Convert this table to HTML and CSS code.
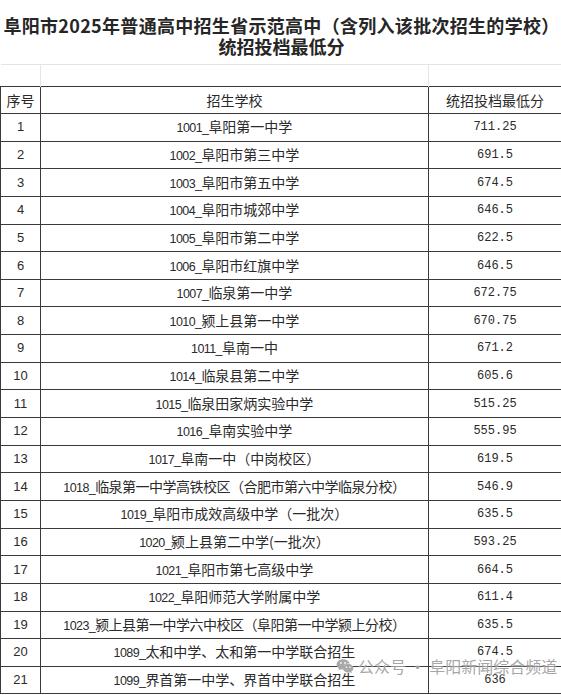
FILE: index.html
```html
<!DOCTYPE html>
<html lang="zh-CN">
<head>
<meta charset="utf-8">
<title>阜阳市2025年普通高中招生省示范高中统招投档最低分</title>
<link rel="stylesheet" href="styles.css">
</head>
<body>
<div class="sheet">
  <div class="title">
    <div class="t1">阜阳市2025年普通高中招生省示范高中（含列入该批次招生的学校）</div>
    <div class="t2">统招投档最低分</div>
  </div>
  <table class="grid">
    <colgroup><col class="c1"><col class="c2"><col class="c3"></colgroup>
    <tr class="spacer"><td></td><td></td><td></td></tr>
    <tr class="head"><td>序号</td><td>招生学校</td><td>统招投档最低分</td></tr>
    <tr><td class="n">1</td><td><span class="code">1001_</span>阜阳第一中学</td><td class="s">711.25</td></tr>
    <tr><td class="n">2</td><td><span class="code">1002_</span>阜阳市第三中学</td><td class="s">691.5</td></tr>
    <tr><td class="n">3</td><td><span class="code">1003_</span>阜阳市第五中学</td><td class="s">674.5</td></tr>
    <tr><td class="n">4</td><td><span class="code">1004_</span>阜阳市城郊中学</td><td class="s">646.5</td></tr>
    <tr><td class="n">5</td><td><span class="code">1005_</span>阜阳市第二中学</td><td class="s">622.5</td></tr>
    <tr><td class="n">6</td><td><span class="code">1006_</span>阜阳市红旗中学</td><td class="s">646.5</td></tr>
    <tr><td class="n">7</td><td><span class="code">1007_</span>临泉第一中学</td><td class="s">672.75</td></tr>
    <tr><td class="n">8</td><td><span class="code">1010_</span>颍上县第一中学</td><td class="s">670.75</td></tr>
    <tr><td class="n">9</td><td><span class="code">1011_</span>阜南一中</td><td class="s">671.2</td></tr>
    <tr><td class="n">10</td><td><span class="code">1014_</span>临泉县第二中学</td><td class="s">605.6</td></tr>
    <tr><td class="n">11</td><td><span class="code">1015_</span>临泉田家炳实验中学</td><td class="s">515.25</td></tr>
    <tr><td class="n">12</td><td><span class="code">1016_</span>阜南实验中学</td><td class="s">555.95</td></tr>
    <tr><td class="n">13</td><td><span class="code">1017_</span>阜南一中（中岗校区）</td><td class="s">619.5</td></tr>
    <tr><td class="n">14</td><td class="tight"><span class="code">1018_</span>临泉第一中学高铁校区（合肥市第六中学临泉分校）</td><td class="s">546.9</td></tr>
    <tr><td class="n">15</td><td><span class="code">1019_</span>阜阳市成效高级中学（一批次）</td><td class="s">635.5</td></tr>
    <tr><td class="n">16</td><td><span class="code">1020_</span>颍上县第二中学(一批次）</td><td class="s">593.25</td></tr>
    <tr><td class="n">17</td><td><span class="code">1021_</span>阜阳市第七高级中学</td><td class="s">664.5</td></tr>
    <tr><td class="n">18</td><td><span class="code">1022_</span>阜阳师范大学附属中学</td><td class="s">611.4</td></tr>
    <tr><td class="n">19</td><td class="tight"><span class="code">1023_</span>颍上县第一中学六中校区（阜阳第一中学颍上分校）</td><td class="s">635.5</td></tr>
    <tr><td class="n">20</td><td><span class="code">1089_</span>太和中学、太和第一中学联合招生</td><td class="s">674.5</td></tr>
    <tr><td class="n">21</td><td><span class="code">1099_</span>界首第一中学、界首中学联合招生</td><td class="s">636</td></tr>
  </table>
  <div class="watermark">
    <svg class="wx" width="18" height="16" viewBox="0 0 18 16" aria-hidden="true">
      <path d="M7 1.2C3.4 1.2 0.6 3.5 0.6 6.4c0 1.7 0.9 3.1 2.4 4.1L2.4 12.4l2.3-1.2c0.7 0.2 1.5 0.3 2.3 0.3 0.2 0 0.4 0 0.6 0-0.1-0.4-0.2-0.8-0.2-1.2 0-2.7 2.6-4.8 5.8-4.8h0.5C13.1 3.1 10.3 1.2 7 1.2z" fill="#a9a9a9"/>
      <circle cx="4.9" cy="4.9" r="0.9" fill="#fff"/>
      <circle cx="9" cy="4.9" r="0.9" fill="#fff"/>
      <path d="M17.4 10.2c0-2.4-2.4-4.3-5.2-4.3s-5.2 1.9-5.2 4.3 2.4 4.3 5.2 4.3c0.6 0 1.2-0.1 1.8-0.3l1.8 1-0.5-1.6c1.2-0.8 2.1-2 2.1-3.4z" fill="#a9a9a9"/>
      <circle cx="10.5" cy="9.3" r="0.75" fill="#fff"/>
      <circle cx="14" cy="9.3" r="0.75" fill="#fff"/>
    </svg>
    <span class="wtext">公众号 · 阜阳新闻综合频道</span>
  </div>
</div>
</body>
</html>
```

FILE: styles.css
```css
html, body {
  margin: 0;
  padding: 0;
  background: #ffffff;
}

.sheet {
  position: relative;
  width: 561px;
  height: 695px;
  overflow: hidden;
  font-family: "Noto Sans CJK SC", "Noto Sans", sans-serif;
  color: #2a2a2a;
}

.title {
  height: 64px;
  box-sizing: border-box;
  padding-top: 15px;
  padding-left: 2px;
  text-align: center;
  font-weight: 700;
  color: #262626;
  font-size: 18px;
  line-height: 21px;
}

.t1 {
  white-space: nowrap;
  letter-spacing: 0.3px;
}

.grid {
  border-collapse: collapse;
  table-layout: fixed;
  width: 561px;
  font-size: 14px;
}

.c1 { width: 40px; }
.c2 { width: 388px; }
.c3 { width: 133px; }

.grid td {
  border: 1px solid #3a3a3a;
  height: 26.65px;
  padding: 0;
  text-align: center;
  vertical-align: middle;
  white-space: nowrap;
  line-height: 16px;
}

.grid tr.spacer td {
  height: 21px;
  border: 1px solid #e4e4e4;
  border-bottom: none;
}

.grid tr.spacer td:first-child { border-left: none; }
.grid tr.spacer td:last-child { border-right: none; }

.grid tr.head td {
  height: 26px;
}

.n {
  font-family: "Liberation Sans", sans-serif;
  font-size: 13px;
}

.s {
  font-family: "Liberation Mono", monospace;
  font-size: 12px;
}

.code {
  font-family: "Liberation Sans", sans-serif;
  font-size: 12.5px;
  letter-spacing: -0.6px;
}

.tight {
  letter-spacing: -0.5px;
}

.watermark {
  position: absolute;
  left: 336px;
  top: 657px;
  display: flex;
  align-items: center;
  gap: 4px;
  color: rgba(150, 150, 150, 0.85);
  font-size: 16px;
  line-height: 18px;
  text-shadow: 0 0 2px rgba(255, 255, 255, 0.9);
}

.wx {
  display: block;
}
```
